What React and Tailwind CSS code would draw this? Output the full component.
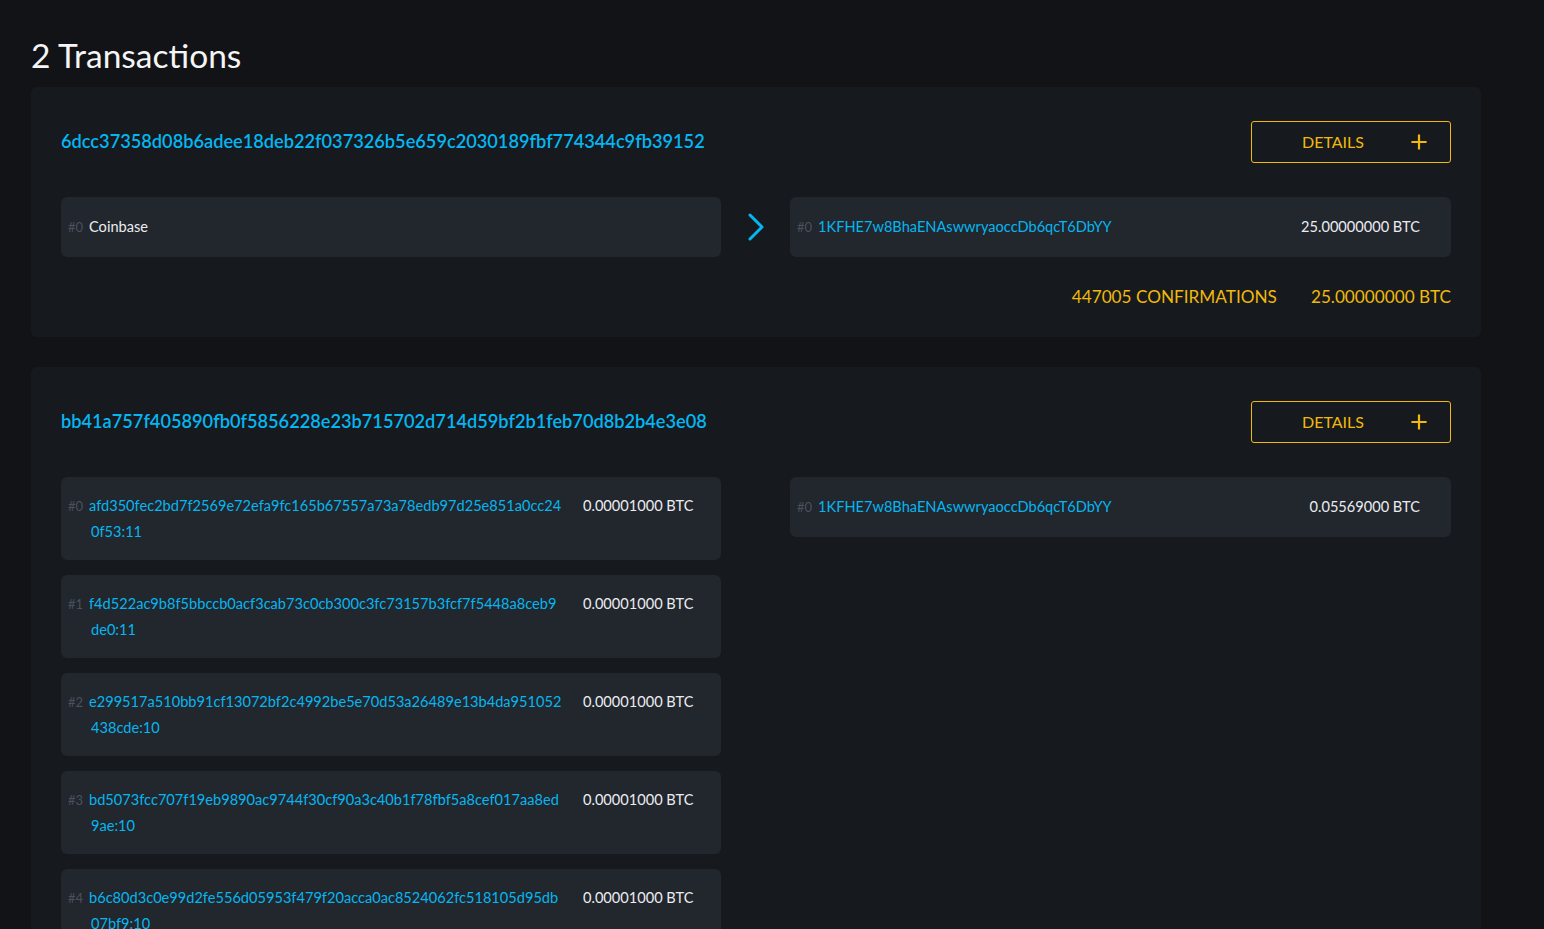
import React from 'react';

const TXS = [
  {
    hash: '6dcc37358d08b6adee18deb22f037326b5e659c2030189fbf774344c9fb39152',
    coinbase: true,
    inputs: [],
    outputs: [{ address: '1KFHE7w8BhaENAswwryaoccDb6qcT6DbYY', amount: '25.00000000 BTC' }],
    confirmations: '447005 CONFIRMATIONS',
    total: '25.00000000 BTC',
  },
  {
    hash: 'bb41a757f405890fb0f5856228e23b715702d714d59bf2b1feb70d8b2b4e3e08',
    coinbase: false,
    inputs: [
      { lines: ['afd350fec2bd7f2569e72efa9fc165b67557a73a78edb97d25e851a0cc24', '0f53:11'], amount: '0.00001000 BTC' },
      { lines: ['f4d522ac9b8f5bbccb0acf3cab73c0cb300c3fc73157b3fcf7f5448a8ceb9', 'de0:11'], amount: '0.00001000 BTC' },
      { lines: ['e299517a510bb91cf13072bf2c4992be5e70d53a26489e13b4da951052', '438cde:10'], amount: '0.00001000 BTC' },
      { lines: ['bd5073fcc707f19eb9890ac9744f30cf90a3c40b1f78fbf5a8cef017aa8ed', '9ae:10'], amount: '0.00001000 BTC' },
      { lines: ['b6c80d3c0e99d2fe556d05953f479f20acca0ac8524062fc518105d95db', '07bf9:10'], amount: '0.00001000 BTC' },
    ],
    outputs: [{ address: '1KFHE7w8BhaENAswwryaoccDb6qcT6DbYY', amount: '0.05569000 BTC' }],
    confirmations: '',
    total: '0.05569000 BTC',
  },
];

const Chevron = () => (
  <svg width="18" height="30" viewBox="0 0 18 30" fill="none">
    <path d="M3 3 L15 15 L3 27" stroke="#05b6f0" strokeWidth="3" strokeLinecap="round" strokeLinejoin="round" />
  </svg>
);

const PlusIcon = () => (
  <svg width="16" height="16" viewBox="0 0 16 16" fill="none">
    <path d="M8 1.5 V14.5 M1.5 8 H14.5" stroke="#f0b90b" strokeWidth="2.2" strokeLinecap="square" />
  </svg>
);

const Index = ({ n }) => (
  <span className="w-[21px] shrink-0 text-[13px] text-[#4a515e]">#{n}</span>
);

const TxCard = ({ tx }) => (
  <div className="rounded-[6px] bg-[#16191e] px-[30px] pt-[34px] pb-[28px]">
    <div className="flex h-[42px] items-center justify-between">
      <span className="text-[18.2px] font-semibold text-[#05b6f0]">{tx.hash}</span>
      <button className="flex h-[42px] w-[200px] items-center justify-between rounded-[3px] border border-[#f0b90b] pl-[50px] pr-[23px] text-[16px] text-[#f0b90b]">
        DETAILS
        <PlusIcon />
      </button>
    </div>

    <div className="mt-[34px] flex items-start">
      <div className="flex w-[660px] flex-col gap-[15px]">
        {tx.coinbase ? (
          <div className="flex min-h-[60px] items-center rounded-[6px] bg-[#22262d] pl-[7px] pr-[31px] text-[14.6px] leading-[26px]">
            <Index n={0} />
            <span className="text-[#eaecef]">Coinbase</span>
          </div>
        ) : (
          tx.inputs.map((inp, i) => (
            <div key={i} className="flex min-h-[60px] items-start rounded-[6px] bg-[#22262d] pt-[16px] pb-[15px] pl-[7px] pr-[31px] text-[14.6px] leading-[26px]">
              <Index n={i} />
              <div className="w-[494px] shrink-0 text-[#05b6f0]">
                {inp.lines.map((l, j) => (
                  <div key={j} className={j > 0 ? 'pl-[2px]' : ''}>{l}</div>
                ))}
              </div>
              <span className="whitespace-nowrap text-[#eaecef]">{inp.amount}</span>
            </div>
          ))
        )}
      </div>

      <div className="flex h-[60px] w-[69px] items-center justify-center">
        {tx.coinbase && <Chevron />}
      </div>

      <div className="flex w-[661px] flex-col gap-[15px]">
        {tx.outputs.map((out, i) => (
          <div key={i} className="flex min-h-[60px] items-center justify-between rounded-[6px] bg-[#22262d] pl-[7px] pr-[31px] text-[14.6px] leading-[26px]">
            <div className="flex items-center">
              <Index n={i} />
              <span className="text-[#05b6f0]">{out.address}</span>
            </div>
            <span className="text-[#eaecef]">{out.amount}</span>
          </div>
        ))}
      </div>
    </div>

    <div className="mt-[28px] flex justify-end gap-[34px] text-[17.2px] leading-[24px] text-[#f0b90b]">
      {tx.confirmations && <span>{tx.confirmations}</span>}
      <span>{tx.total}</span>
    </div>
  </div>
);

export default function App() {
  return (
    <div className="min-h-screen bg-[#121317] px-[31px] pt-[35px] pb-[40px] font-['Lato',sans-serif]">
      <h1 className="text-[33.5px] leading-[40px] text-[#f5f5f5]">2 Transactions</h1>
      <div className="mt-[12px] flex w-[1450px] flex-col gap-[30px]">
        {TXS.map((tx) => (
          <TxCard key={tx.hash} tx={tx} />
        ))}
      </div>
    </div>
  );
}
